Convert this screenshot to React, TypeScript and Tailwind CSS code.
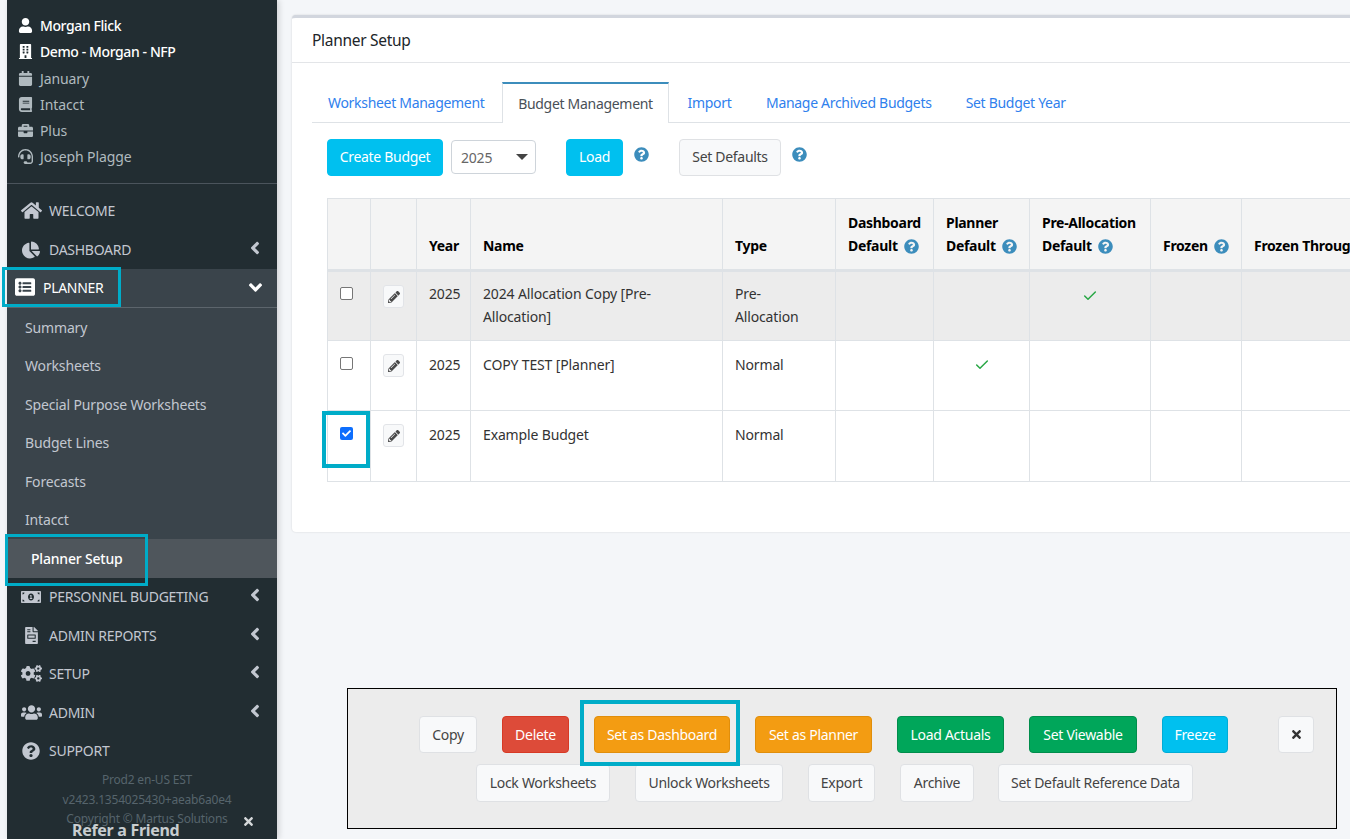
import type { ReactNode } from 'react';
import { Check as CheckIcon } from 'lucide-react';
import { FaAngleDown, FaAngleLeft, FaBook, FaBriefcase, FaBuilding, FaCalendar, FaChartPie, FaCheck, FaCogs, FaFileInvoice, FaHeadset, FaHome, FaListAlt, FaMoneyBillAlt, FaPencilAlt, FaQuestionCircle, FaTimes, FaUser, FaUsers } from 'react-icons/fa';

const userRows = [
  { icon: <FaUser />, label: 'Morgan Flick', strong: true },
  { icon: <FaBuilding />, label: 'Demo - Morgan - NFP', strong: true },
  { icon: <FaCalendar />, label: 'January', strong: false },
  { icon: <FaBook />, label: 'Intacct', strong: false },
  { icon: <FaBriefcase />, label: 'Plus', strong: false },
  { icon: <FaHeadset />, label: 'Joseph Plagge', strong: false },
];

const subItems = ['Summary', 'Worksheets', 'Special Purpose Worksheets', 'Budget Lines', 'Forecasts', 'Intacct'];

const NavItem = ({ icon, label, arrow = true }: { icon: ReactNode; label: string; arrow?: boolean }) => (
  <div className="h-[38.5px] flex items-center pl-[13px] pr-[12px] text-[#c2c7d0]">
    <span className="w-[22px] flex justify-center">{icon}</span>
    <span className="ml-[7px] flex-1 text-[14px] tracking-[-0.27px]">{label}</span>
    {arrow && <FaAngleLeft className="text-[20px] -mt-[3px]" />}
  </div>
);

const Help = ({ className = '' }: { className?: string }) => (
  <FaQuestionCircle className={`inline text-[15px] text-[#3c8dbc] ${className}`} />
);

const Check = ({ className }: { className: string }) => (
  <CheckIcon className={`mx-auto w-[16px] h-[16px] text-[#28a745] ${className}`} strokeWidth={2.2} />
);

const PencilBtn = () => (
  <div className="w-[21px] h-[23px] flex items-center justify-center bg-[#f8f9fa] border border-[#e2e4e8] rounded-[3px] text-[#4a4a4a]">
    <FaPencilAlt className="text-[12px]" />
  </div>
);

const Btn = ({ className, children }: { className: string; children: ReactNode }) => (
  <div className={`h-[37px] flex items-center justify-center rounded-[4px] text-[14px] tracking-[-0.3px] border ${className}`}>{children}</div>
);

const light = 'bg-[#f8f9fa] border-[#dfe1e4] text-[#444]';

const rows = [
  { name: <>2024 Allocation Copy [Pre-<br />Allocation]</>, type: <>Pre-<br />Allocation</>, check: 'pre', bg: 'bg-[#ececec]', h: 'h-[70px]', pt: 'pt-[10px]', box: 'mt-[3px]', tick: 'mt-[6px]' },
  { name: <>COPY TEST [Planner]</>, type: <>Normal</>, check: 'planner', bg: 'bg-white', h: 'h-[70px]', pt: 'pt-[12px]', box: 'mt-[4px]', tick: 'mt-[4px]' },
  { name: <>Example Budget</>, type: <>Normal</>, check: '', bg: 'bg-white', h: 'h-[71px]', pt: 'pt-[12px]', box: 'mt-[4px]', tick: '' },
];

const th = 'border border-[#dee2e6] border-b-[3px] px-3 pb-[12px] align-bottom text-left font-bold text-[14px] leading-[23px] text-black tracking-[-0.3px]';
const td = 'border border-[#dee2e6] px-3 align-top text-[14px] leading-[23px] text-[#333] tracking-[-0.15px]';

export default function App() {
  return (
    <div className="relative w-[1350px] h-[839px] overflow-hidden flex bg-[#f4f6f9] font-['Noto_Sans',sans-serif]">
      {/* Sidebar */}
      <aside className="ml-[7px] w-[270px] h-full shrink-0 bg-[#222d32] shadow-[2px_0_6px_rgba(0,0,0,0.15)]">
        <div className="pt-[13px] pl-[10px] pb-[14px] border-b border-[#4b545c]">
          {userRows.map((r) => (
            <div key={r.label} className={`h-[26px] flex items-center text-[14px] ${r.strong ? 'text-white font-medium tracking-[-0.4px] -mt-px mb-px' : 'text-[#b0babf] tracking-[-0.1px]'}`}>
              <span className="w-[16px] flex justify-center text-[15px]">{r.icon}</span>
              <span className="ml-[7px]">{r.label}</span>
            </div>
          ))}
        </div>
        <div className="pt-[7px]">
          <NavItem icon={<FaHome className="text-[21px]" />} label="WELCOME" arrow={false} />
          <div className="pt-px">
            <NavItem icon={<FaChartPie className="text-[18px]" />} label="DASHBOARD" />
          </div>
          <div className="h-[39px] flex items-center pl-[8px] pr-[11px] pb-[2px] bg-[#3a444b] text-white border-b border-[#5c656c]">
            <FaListAlt className="text-[20px]" />
            <span className="ml-[8px] flex-1 text-[14px] tracking-[-0.3px]">PLANNER</span>
            <FaAngleDown className="text-[21px]" />
          </div>
          <div className="bg-[#3a444b]">
            {subItems.map((s) => (
              <div key={s} className="h-[38.5px] flex items-center pl-[18px] text-[14px] tracking-[-0.15px] text-[#c2c7d0]">{s}</div>
            ))}
            <div className="h-[38.5px] flex items-center pl-[24px] bg-[#4f565c] text-[14px] font-medium tracking-[-0.2px] text-white">Planner Setup</div>
          </div>
          <NavItem icon={<FaMoneyBillAlt className="text-[20px]" />} label="PERSONNEL BUDGETING" />
          <NavItem icon={<FaFileInvoice className="text-[17px]" />} label="ADMIN REPORTS" />
          <NavItem icon={<FaCogs className="text-[21px]" />} label="SETUP" />
          <NavItem icon={<FaUsers className="text-[21px]" />} label="ADMIN" />
          <NavItem icon={<FaQuestionCircle className="text-[18px]" />} label="SUPPORT" arrow={false} />
        </div>
        <div className="pl-[10px] text-center text-[12px] leading-[19.5px] tracking-[-0.2px] text-[#56646c]">
          <div>Prod2 en-US EST</div>
          <div>v2423.1354025430+aeab6a0e4</div>
          <div>Copyright © Martus Solutions</div>
        </div>
      </aside>

      {/* Main */}
      <main className="pl-[15px] pt-[15px] flex-1 min-w-0">
        <div className="w-[1100px] h-[517px] bg-white border-t-[3px] border-[#d2d6de] rounded-[4px] shadow-[0_0_2px_rgba(0,0,0,0.15)]">
          <div className="h-[45px] flex items-center pl-[20px] pt-[2px] text-[15.5px] tracking-[-0.3px] text-[#212529] border-b border-[#e3e5e8]">Planner Setup</div>
          <div className="px-[20px] pt-[19px]">
            <div className="flex items-end h-[41px] border-b border-[#dee2e6] text-[14px] tracking-[-0.3px] text-[#2f80ed]">
              <span className="w-[190px] pl-[16px] pb-[9px]">Worksheet Management</span>
              <span className="w-[167px] h-[41px] bg-white border-x border-[#dee2e6] border-t-2 border-t-[#3c8dbc] -mb-px flex items-center justify-center text-[#495057]">Budget Management</span>
              <span className="w-[81px] text-center pb-[9px]">Import</span>
              <span className="ml-[16px] pb-[9px]">Manage Archived Budgets</span>
              <span className="ml-[34px] pb-[9px]">Set Budget Year</span>
            </div>
            <div className="flex items-start pl-[15px] pt-[16px]">
              <Btn className="w-[116px] h-[36px] pb-[2px] bg-[#00c0ef] border-[#00c0ef] text-white">Create Budget</Btn>
              <div className="relative ml-[8px] mt-[1px] w-[85px] h-[34px] flex items-center pl-[9px] text-[14px] tracking-[-0.2px] text-[#666] bg-white border border-[#ced4da] rounded-[4px]">
                2025
                <span className="absolute right-[7px] top-[13px] w-0 h-0 border-x-[6px] border-x-transparent border-t-[6px] border-t-[#444]" />
              </div>
              <Btn className="ml-[30px] w-[57px] h-[36px] pb-[2px] bg-[#00c0ef] border-[#00c0ef] text-white">Load</Btn>
              <Help className="ml-[11px] mt-[8px]" />
              <Btn className={`ml-[30px] w-[102px] h-[36px] pb-[2px] ${light}`}>Set Defaults</Btn>
              <Help className="ml-[11px] mt-[8px]" />
            </div>
            <table className="mt-[22px] ml-[15px] table-fixed border-collapse w-[1023px]">
              <colgroup>
                <col className="w-[43px]" /><col className="w-[46px]" /><col className="w-[54px]" /><col className="w-[252px]" /><col className="w-[113px]" /><col className="w-[98px]" /><col className="w-[96px]" /><col className="w-[121px]" /><col className="w-[91px]" /><col className="w-[109px]" />
              </colgroup>
              <thead>
                <tr className="h-[72px] bg-[#f4f4f4]">
                  <th className={th} />
                  <th className={th} />
                  <th className={th}>Year</th>
                  <th className={th}>Name</th>
                  <th className={th}>Type</th>
                  <th className={th}>Dashboard<br />Default <Help className="ml-[3px] -mt-[2px]" /></th>
                  <th className={th}>Planner<br />Default <Help className="ml-[3px] -mt-[2px]" /></th>
                  <th className={th}>Pre-Allocation<br />Default <Help className="ml-[3px] -mt-[2px]" /></th>
                  <th className={`${th} whitespace-nowrap`}>Frozen <Help className="ml-[3px] -mt-[2px]" /></th>
                  <th className={`${th} whitespace-nowrap overflow-hidden`}>Frozen Through</th>
                </tr>
              </thead>
              <tbody>
                {rows.map((r, i) => (
                  <tr key={i} className={`${r.h} ${r.bg}`}>
                    <td className={`${td} pt-[12px]`}>
                      {i === 2 ? (
                        <span className={`w-[13px] h-[13px] ${r.box} rounded-[2px] bg-[#0d6efd] text-white flex items-center justify-center`}><FaCheck className="text-[9px]" /></span>
                      ) : (
                        <span className={`block w-[13px] h-[13px] ${r.box} rounded-[2px] bg-white border border-[#767676]`} />
                      )}
                    </td>
                    <td className={`${td} pt-[13px]`}><PencilBtn /></td>
                    <td className={`${td} ${r.pt}`}>2025</td>
                    <td className={`${td} ${r.pt}`}>{r.name}</td>
                    <td className={`${td} ${r.pt}`}>{r.type}</td>
                    <td className={td} />
                    <td className={`${td} ${r.pt}`}>{r.check === 'planner' && <Check className={r.tick} />}</td>
                    <td className={`${td} ${r.pt}`}>{r.check === 'pre' && <Check className={r.tick} />}</td>
                    <td className={td} />
                    <td className={td} />
                  </tr>
                ))}
              </tbody>
            </table>
          </div>
        </div>
      </main>

      {/* Floating action panel */}
      <div className="absolute left-[347px] top-[688px] w-[990px] h-[141px] bg-[#ececec] border border-black pt-[27px]">
        <div className="flex gap-[25px] pl-[71px]">
          <Btn className={`w-[58px] ${light}`}>Copy</Btn>
          <Btn className="w-[67px] bg-[#dd4b39] border-[#d73925] text-white">Delete</Btn>
          <Btn className="w-[136px] bg-[#f39c12] border-[#e08e0b] text-white">Set as Dashboard</Btn>
          <Btn className="w-[117px] bg-[#f39c12] border-[#e08e0b] text-white">Set as Planner</Btn>
          <Btn className="w-[107px] bg-[#00a65a] border-[#008d4c] text-white">Load Actuals</Btn>
          <Btn className="w-[108px] bg-[#00a65a] border-[#008d4c] text-white">Set Viewable</Btn>
          <Btn className="w-[66px] bg-[#00c0ef] border-[#00acd6] text-white">Freeze</Btn>
          <Btn className={`ml-[25px] w-[36px] ${light}`}><FaTimes className="text-[13px] text-[#333]" /></Btn>
        </div>
        <div className="flex gap-[25px] pl-[128px] mt-[11px]">
          <Btn className={`w-[134px] h-[38px] pb-[2px] ${light}`}>Lock Worksheets</Btn>
          <Btn className={`w-[148px] h-[38px] pb-[2px] ${light}`}>Unlock Worksheets</Btn>
          <Btn className={`w-[67px] h-[38px] pb-[2px] ${light}`}>Export</Btn>
          <Btn className={`w-[74px] h-[38px] pb-[2px] ${light}`}>Archive</Btn>
          <Btn className={`-ml-px w-[195px] h-[38px] pb-[2px] ${light}`}>Set Default Reference Data</Btn>
        </div>
      </div>

      {/* Refer a friend strip over the sidebar footer */}
      <div className="absolute left-[72px] top-[820px] text-[16px] font-bold leading-[20px] tracking-[-0.3px] text-[#c8cdd0]">Refer a Friend</div>
      <FaTimes className="absolute left-[242px] top-[815px] text-[13px] text-[#d5d8da]" />

      {/* Teal tutorial highlights */}
      <div className="absolute left-[2px] top-[267px] w-[119px] h-[40px] border-[3px] border-[#00acc8]" />
      <div className="absolute left-[5px] top-[534px] w-[143px] h-[52px] border-[3px] border-[#00acc8]" />
      <div className="absolute left-[322px] top-[411px] w-[48px] h-[57px] border-[4px] border-[#00acc8]" />
      <div className="absolute left-[580px] top-[700px] w-[160px] h-[66px] border-[4px] border-[#00acc8]" />
    </div>
  );
}
